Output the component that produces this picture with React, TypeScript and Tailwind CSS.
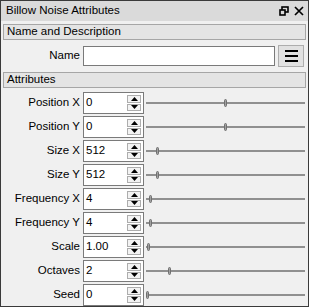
import React from 'react';

const rows = [
    { label: 'Position X', value: '0', pos: 224 },
    { label: 'Position Y', value: '0', pos: 224 },
    { label: 'Size X', value: '512', pos: 156 },
    { label: 'Size Y', value: '512', pos: 156 },
    { label: 'Frequency X', value: '4', pos: 149 },
    { label: 'Frequency Y', value: '4', pos: 149 },
    { label: 'Scale', value: '1.00', pos: 147 },
    { label: 'Octaves', value: '2', pos: 168 },
    { label: 'Seed', value: '0', pos: 146 },
];

function SectionHeader({ title }: { title: string }) {
    return (
        <div className="mx-[2px] h-[16px] border border-[#a6a6a6] bg-[#e4e4e4] pl-[3px] flex items-center leading-none">
            {title}
        </div>
    );
}

function SpinButtons() {
    return (
        <div className="absolute right-[2px] top-[2px] bottom-[2px] w-[14px] flex flex-col gap-[1px]">
            <div className="flex-1 border border-[#adadad] bg-[#f3f3f3] flex items-center justify-center">
                <svg width="7" height="4" viewBox="0 0 7 4"><path d="M3.5 0 L7 4 L0 4 Z" fill="#000" /></svg>
            </div>
            <div className="flex-1 border border-[#adadad] bg-[#f3f3f3] flex items-center justify-center">
                <svg width="7" height="4" viewBox="0 0 7 4"><path d="M0 0 L7 0 L3.5 4 Z" fill="#000" /></svg>
            </div>
        </div>
    );
}

function Slider({ pos }: { pos: number }) {
    // pos is the handle's x in the window, slider starts at 145
    return (
        <div className="relative flex-1 h-[22px] ml-[2px] mr-[3px]">
            <div className="absolute left-0 right-0 top-[10px] h-[2px] bg-[#909090]" />
            <div
                className="absolute top-[7px] w-[3px] h-[8px] rounded-full bg-[#a0a0a0] border border-[#707070]"
                style={{ left: pos - 146 }}
            />
        </div>
    );
}

export default function App() {
    return (
        <div
            className="w-[309px] h-[307px] border border-[#3a3a3a] bg-[#f0f0f0] flex flex-col text-[11.5px] text-black overflow-hidden"
            style={{ fontFamily: '"Liberation Sans", Arial, sans-serif' }}
        >
            <div className="h-[21px] bg-[#dadada] flex items-center justify-between pl-[5px] pr-[4px]">
                <span>Billow Noise Attributes</span>
                <div className="flex items-center gap-[5px]">
                    <svg width="10" height="10" viewBox="0 0 10 10" fill="none" stroke="#000" strokeWidth="1.6">
                        <rect x="3" y="1" width="6" height="5" />
                        <rect x="1" y="4" width="5" height="5" fill="#dadada" />
                    </svg>
                    <svg width="10" height="10" viewBox="0 0 10 10" stroke="#000" strokeWidth="1.7">
                        <path d="M1 1 L9 9 M9 1 L1 9" />
                    </svg>
                </div>
            </div>

            <div className="pt-[3px] flex flex-col">
                <SectionHeader title="Name and Description" />

                <div className="flex items-center mt-[5px] h-[22px]">
                    <span className="w-[79px] text-right">Name</span>
                    <div className="ml-[3px] w-[192px] h-[20px] border border-[#7a7a7a] bg-white" />
                    <button className="ml-[3px] w-[26px] h-[22px] border border-[#adadad] bg-[#e1e1e1] flex flex-col items-center justify-center gap-[3px]">
                        <span className="block w-[13px] h-[2px] bg-black" />
                        <span className="block w-[13px] h-[2px] bg-black" />
                        <span className="block w-[13px] h-[2px] bg-black" />
                    </button>
                </div>

                <div className="mt-[5px]">
                    <SectionHeader title="Attributes" />
                </div>

                <div className="flex flex-col gap-[2px] mt-[4px]">
                    {rows.map((r) => (
                        <div key={r.label} className="flex items-center h-[22px]">
                            <span className="w-[79px] text-right">{r.label}</span>
                            <div className="relative ml-[3px] w-[61px] h-[22px] border border-[#7a7a7a] bg-white flex items-center pl-[2px]">
                                {r.value}
                                <SpinButtons />
                            </div>
                            <Slider pos={r.pos} />
                        </div>
                    ))}
                </div>
            </div>
        </div>
    );
}
